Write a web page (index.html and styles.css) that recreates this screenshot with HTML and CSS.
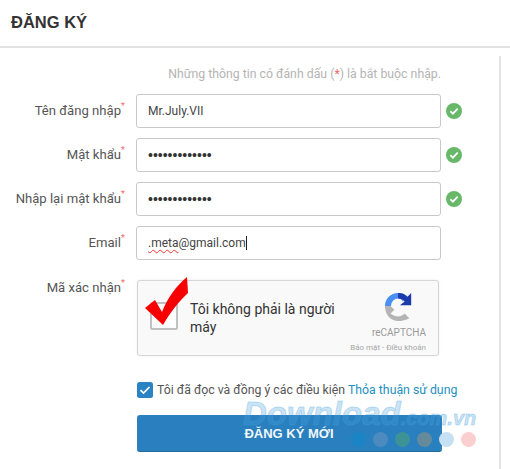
FILE: index.html
```html
<!DOCTYPE html>
<html lang="vi">
<head>
<meta charset="utf-8">
<title>Đăng ký</title>
<link rel="stylesheet" href="styles.css">
</head>
<body>
<header class="head"><h1 class="title">ĐĂNG KÝ</h1></header>
<main class="panel">
  <p class="note">Những thông tin có đánh dấu (<span class="red">*</span>) là bắt buộc nhập.</p>
  <div class="row">
    <label class="label">Tên đăng nhập<sup class="star">*</sup></label>
    <div class="field">Mr.July.VII</div>
    <svg class="ok" viewBox="0 0 16 16"><circle cx="8" cy="8" r="8" fill="#67b868"/><path d="M4.3 8.2l2.6 2.5 4.8-5" fill="none" stroke="#fff" stroke-width="1.8"/></svg>
  </div>
  <div class="row">
    <label class="label">Mật khẩu<sup class="star">*</sup></label>
    <div class="field dots">•••••••••••••</div>
    <svg class="ok" viewBox="0 0 16 16"><circle cx="8" cy="8" r="8" fill="#67b868"/><path d="M4.3 8.2l2.6 2.5 4.8-5" fill="none" stroke="#fff" stroke-width="1.8"/></svg>
  </div>
  <div class="row">
    <label class="label">Nhập lại mật khẩu<sup class="star">*</sup></label>
    <div class="field dots">•••••••••••••</div>
    <svg class="ok" viewBox="0 0 16 16"><circle cx="8" cy="8" r="8" fill="#67b868"/><path d="M4.3 8.2l2.6 2.5 4.8-5" fill="none" stroke="#fff" stroke-width="1.8"/></svg>
  </div>
  <div class="row">
    <label class="label">Email<sup class="star">*</sup></label>
    <div class="field"><span class="typo">.meta</span>@gmail.com<span class="caret"></span></div>
  </div>
  <div class="row captcha-row">
    <label class="label">Mã xác nhận<sup class="star">*</sup></label>
    <div class="captcha">
      <span class="cap-box"></span>
      <svg class="tick" viewBox="0 0 44 52"><path d="M0 31l10-8 7 12C22 22 31 9 42 0l1 16C34 24 25 36 18 48z" fill="#f70000"/></svg>
      <span class="cap-text">Tôi không phải là người máy</span>
      <div class="cap-brand">
        <svg class="cap-logo" viewBox="0 0 32 32">
          <path d="M1 15C1 7 7 1 15 1c4 0 7 1 10 4l-5 5c-1-2-3-3-5-3-4 0-7 3-7.500 8z" fill="#4a90f2"/>
          <path d="M15 1c4 0 7 1 10 4l4-4v13H17l5-4c-2-2-4-3-7-3z" fill="#1c3aa9"/>
          <path d="M1 15h6l4 4-4 4 0 0c2 2 5 3 8 3 3 0 5-1 7-3l5 5c-3 2-8 3-12 3C7 31 1 24 1 15z" fill="#b4b4b4"/>
        </svg>
        <span class="cap-name">reCAPTCHA</span>
        <span class="cap-links">Bảo mật - Điều khoản</span>
      </div>
    </div>
  </div>
  <div class="agree">
    <svg class="check" viewBox="0 0 16 16"><rect width="16" height="16" rx="2.500" fill="#2a84c4"/><path d="M3.500 8.200l3 2.800 6-6" fill="none" stroke="#fff" stroke-width="1.700"/></svg>
    <span>Tôi đã đọc và đồng ý các điều kiện <a class="link" href="#">Thỏa thuận sử dụng</a></span>
  </div>
  <button class="submit" type="button">ĐĂNG KÝ MỚI</button>
</main>
<div class="mark">
  <span class="mark-text">Download<small class="mark-small">.com.vn</small></span>
  <div class="mark-dots">
    <i class="dot d1"></i><i class="dot d2"></i><i class="dot d3"></i><i class="dot d4"></i><i class="dot d5"></i><i class="dot d6"></i>
  </div>
</div>
</body>
</html>
```
FILE: styles.css
```css
* { box-sizing: border-box; }
html, body { margin: 0; padding: 0; }
body {
  width: 510px;
  height: 469px;
  overflow: hidden;
  background: #fff;
  font-family: Roboto, "Liberation Sans", sans-serif;
  position: relative;
  color: #555;
}
.head {
  height: 48px;
  border-bottom: 2px solid #e2e2e2;
  padding: 11px 0 0 11px;
}
.title {
  margin: 0;
  font-size: 16.500px;
  line-height: 22px;
  font-weight: 700;
  color: #333;
  font-family: "Liberation Sans", sans-serif;
}
.panel {
  width: 501px;
  height: 413px;
  margin-top: 8px;
  border-right: 2px solid #e2e2e2;
  padding-top: 10px;
}
.note {
  margin: 0 0 12px;
  width: 441px;
  text-align: right;
  font-size: 12.300px;
  line-height: 16px;
  color: #b4b4b4;
}
.red { color: #f26b6b; }
.row {
  display: flex;
  align-items: center;
  height: 34px;
  margin-bottom: 10px;
}
.label {
  width: 121px;
  flex: none;
  margin-right: 15px;
  text-align: right;
  font-size: 13.100px;
  line-height: 20px;
  color: #555;
  white-space: nowrap;
  position: relative;
}
.star {
  color: #f26b6b;
  font-size: 9px;
  line-height: 0;
  position: absolute;
  top: 5px;
}
.field {
  width: 305px;
  height: 34px;
  flex: none;
  border: 1px solid #c9c9c9;
  border-radius: 3px;
  padding: 0 11px;
  font-size: 12px;
  line-height: 33px;
  color: #444;
  white-space: nowrap;
}
.dots {
  font-size: 14px;
  font-family: "Liberation Sans", sans-serif;
  color: #333;
}
.typo {
  text-decoration: underline wavy #e33 1px;
  text-underline-offset: 2px;
}
.caret {
  display: inline-block;
  width: 1px;
  height: 14px;
  background: #222;
  vertical-align: -3px;
}
.ok { width: 16px; height: 16px; margin-left: 5px; flex: none; }
.captcha-row {
  height: 76px;
  align-items: flex-start;
  margin: 20px 0 0;
}
.captcha-row .label { top: -2px; }
.captcha {
  width: 302px;
  height: 76px;
  flex: none;
  margin-left: 1px;
  background: #f9f9f9;
  border: 1px solid #d6d6d6;
  border-radius: 3px;
  box-shadow: 0 0 3px rgba(0,0,0,.08);
  position: relative;
  display: flex;
  align-items: flex-start;
}
.cap-box {
  width: 28px;
  height: 28px;
  margin: 21px 0 0 12px;
  flex: none;
  background: #fff;
  border: 2px solid #c1c1c1;
  border-radius: 2px;
}
.tick {
  position: absolute;
  left: 7px;
  top: -4px;
  width: 44px;
  height: 52px;
}
.cap-text {
  width: 160px;
  margin: 19px 0 0 12px;
  font-size: 14px;
  line-height: 18px;
  color: #333;
}
.cap-brand {
  position: absolute;
  right: 12px;
  top: 11px;
  width: 80px;
  display: flex;
  flex-direction: column;
  align-items: flex-end;
}
.cap-logo { width: 30px; height: 30px; margin-right: 12px; }
.cap-name { font-size: 10px; line-height: 12px; margin-top: 5px; color: #999; }
.cap-links { font-size: 8px; line-height: 10px; margin-top: 4px; color: #a6a6a6; white-space: nowrap; }
.agree {
  display: flex;
  align-items: center;
  gap: 4px;
  margin: 26px 0 0 137px;
  font-size: 12.300px;
  line-height: 16px;
  color: #555;
  white-space: nowrap;
}
.check { width: 16px; height: 16px; flex: none; }
.link { color: #1d8fc1; text-decoration: none; }
.submit {
  display: block;
  width: 305px;
  height: 37px;
  margin: 17px 0 0 136.500px;
  background: #2a80bf;
  border: 0;
  border-bottom: 1px solid #24699c;
  border-radius: 3px;
  color: #f2f7fb;
  font-family: "Liberation Sans", sans-serif;
  font-size: 13px;
  font-weight: 700;
}
.mark { position: absolute; left: 243px; top: 396px; width: 240px; height: 70px; }
.mark-text {
  position: absolute;
  left: 0;
  top: 0;
  font-family: "Liberation Sans", sans-serif;
  font-size: 33px;
  font-weight: 700;
  font-style: italic;
  line-height: 36px;
  color: rgba(70,160,220,.3);
  -webkit-text-stroke: 1px rgba(70,160,220,.3);
  white-space: nowrap;
}
.mark-small { font-size: 20px; }
.mark-dots { position: absolute; left: 108px; top: 36px; display: flex; gap: 7px; }
.dot { width: 15px; height: 15px; border-radius: 50%; }
.d1 { background: #1a84c4; }
.d2 { background: #4d8bbf; }
.d3 { background: #3d9296; }
.d4 { background: #648a9c; }
.d5 { background: #c5e0f2; }
.d6 { background: #fbcfcf; }
```
